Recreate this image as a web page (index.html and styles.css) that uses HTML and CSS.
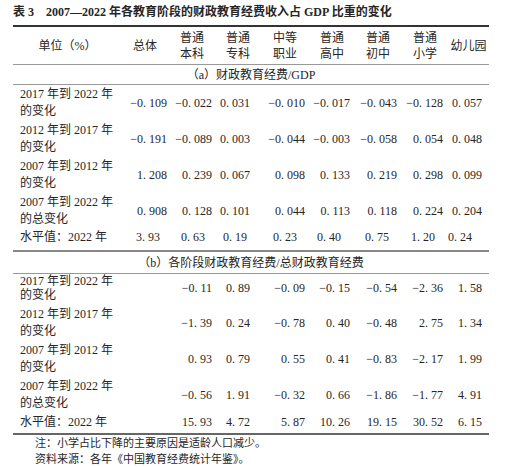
FILE: index.html
```html
<!DOCTYPE html>
<html lang="zh-CN">
<head>
    <meta charset="UTF-8">
    <meta name="viewport" content="width=device-width, initial-scale=1.0">
    <title>表 3</title>
    <link rel="stylesheet" href="styles.css">
</head>
<body>
    <div class="page">
        <h1 class="caption"><span class="tag">表 3</span>2007—2022 年各教育阶段的财政教育经费收入占 GDP 比重的变化</h1>

        <table class="data">
            <colgroup>
                <col class="c-label">
                <col class="c-total">
                <col class="c-bk">
                <col class="c-zk">
                <col class="c-zz">
                <col class="c-gz">
                <col class="c-cz">
                <col class="c-xx">
                <col class="c-yey">
            </colgroup>
            <thead>
                <tr>
                    <th>单位（%）</th>
                    <th>总体</th>
                    <th>普通<br>本科</th>
                    <th>普通<br>专科</th>
                    <th>中等<br>职业</th>
                    <th>普通<br>高中</th>
                    <th>普通<br>初中</th>
                    <th>普通<br>小学</th>
                    <th>幼儿园</th>
                </tr>
            </thead>
            <tbody>
                <tr class="section section-a">
                    <td colspan="9">（a）财政教育经费/GDP</td>
                </tr>
                <tr>
                    <td class="label">2017 年到 2022 年<br>的变化</td>
                    <td>−0. 109</td><td>−0. 022</td><td>0. 031</td><td>−0. 010</td>
                    <td>−0. 017</td><td>−0. 043</td><td>−0. 128</td><td>0. 057</td>
                </tr>
                <tr>
                    <td class="label">2012 年到 2017 年<br>的变化</td>
                    <td>−0. 191</td><td>−0. 089</td><td>0. 003</td><td>−0. 044</td>
                    <td>−0. 003</td><td>−0. 058</td><td>0. 054</td><td>0. 048</td>
                </tr>
                <tr>
                    <td class="label">2007 年到 2012 年<br>的变化</td>
                    <td>1. 208</td><td>0. 239</td><td>0. 067</td><td>0. 098</td>
                    <td>0. 133</td><td>0. 219</td><td>0. 298</td><td>0. 099</td>
                </tr>
                <tr>
                    <td class="label">2007 年到 2022 年<br>的总变化</td>
                    <td>0. 908</td><td>0. 128</td><td>0. 101</td><td>0. 044</td>
                    <td>0. 113</td><td>0. 118</td><td>0. 224</td><td>0. 204</td>
                </tr>
                <tr class="level level-a">
                    <td class="label">水平值：2022 年</td>
                    <td>3. 93</td><td>0. 63</td><td>0. 19</td><td>0. 23</td>
                    <td>0. 40</td><td>0. 75</td><td>1. 20</td><td>0. 24</td>
                </tr>

                <tr class="section section-b">
                    <td colspan="9">（b）各阶段财政教育经费/总财政教育经费</td>
                </tr>
                <tr class="first-b">
                    <td class="label">2017 年到 2022 年<br>的变化</td>
                    <td></td><td>−0. 11</td><td>0. 89</td><td>−0. 09</td>
                    <td>−0. 15</td><td>−0. 54</td><td>−2. 36</td><td>1. 58</td>
                </tr>
                <tr>
                    <td class="label">2012 年到 2017 年<br>的变化</td>
                    <td></td><td>−1. 39</td><td>0. 24</td><td>−0. 78</td>
                    <td>0. 40</td><td>−0. 48</td><td>2. 75</td><td>1. 34</td>
                </tr>
                <tr>
                    <td class="label">2007 年到 2012 年<br>的变化</td>
                    <td></td><td>0. 93</td><td>0. 79</td><td>0. 55</td>
                    <td>0. 41</td><td>−0. 83</td><td>−2. 17</td><td>1. 99</td>
                </tr>
                <tr>
                    <td class="label">2007 年到 2022 年<br>的总变化</td>
                    <td></td><td>−0. 56</td><td>1. 91</td><td>−0. 32</td>
                    <td>0. 66</td><td>−1. 86</td><td>−1. 77</td><td>4. 91</td>
                </tr>
                <tr class="level level-b">
                    <td class="label">水平值：2022 年</td>
                    <td></td><td>15. 93</td><td>4. 72</td><td>5. 87</td>
                    <td>10. 26</td><td>19. 15</td><td>30. 52</td><td>6. 15</td>
                </tr>
            </tbody>
        </table>

        <div class="notes">
            <p>注：小学占比下降的主要原因是适龄人口减少。</p>
            <p>资料来源：各年《中国教育经费统计年鉴》。</p>
        </div>
    </div>
</body>
</html>
```

FILE: styles.css
```css
* {
    margin: 0;
    padding: 0;
    box-sizing: border-box;
}

body {
    font-family: 'Liberation Serif', 'Noto Sans CJK SC', serif;
    font-size: 12px;
    color: #262626;
    background: #fff;
}

.page {
    width: 507px;
    padding: 4px 18px 0 13px;
}

/* caption */
.caption {
    font-size: 12px;
    font-weight: bold;
    line-height: 17px;
    margin-bottom: 4px;
    white-space: nowrap;
}

.caption .tag {
    margin-right: 12px;
}

/* table */
.data {
    width: 476px;
    border-collapse: collapse;
    table-layout: fixed;
    border-top: 2px solid #333;
}

.c-label { width: 109px; }
.c-total { width: 46px; }
.c-bk { width: 48px; }
.c-zk { width: 44px; }
.c-zz { width: 50px; }
.c-gz { width: 44px; }
.c-cz { width: 48px; }
.c-xx { width: 46px; }
.c-yey { width: 41px; }

.data th {
    font-weight: normal;
    line-height: 16px;
    padding: 3px 0 2px;
    text-align: center;
    vertical-align: middle;
    border-bottom: 1px solid #999;
}

.data td {
    line-height: 17px;
    padding: 1px 0;
    text-align: right;
    vertical-align: middle;
    white-space: nowrap;
}

.data td.label {
    text-align: left;
    padding-left: 7px;
}

/* number columns: right edges */
.data td:nth-child(2) { padding-right: 1px; }
.data td:nth-child(3) { padding-right: 4px; }
.data td:nth-child(4) { padding-right: 10px; }
.data td:nth-child(5) { padding-right: 5px; }
.data td:nth-child(6) { padding-right: 4px; }
.data td:nth-child(7) { padding-right: 5px; }
.data td:nth-child(8) { padding-right: 5px; }
.data td:nth-child(9) { padding-right: 7px; }

.level-a td:nth-child(2) { padding-right: 8px; }
.level-a td:nth-child(3) { padding-right: 11px; }
.level-a td:nth-child(4) { padding-right: 13px; }
.level-a td:nth-child(5) { padding-right: 13px; }
.level-a td:nth-child(6) { padding-right: 13px; }
.level-a td:nth-child(7) { padding-right: 13px; }
.level-a td:nth-child(8) { padding-right: 13px; }
.level-a td:nth-child(9) { padding-right: 17px; }

.data tr.section td {
    text-align: center;
    line-height: 18px;
    border-bottom: 1px solid #999;
}

.data tr.section-a td {
    padding: 1px 0 0;
}

.data tr.section-b td {
    padding: 2px 0 1px;
}

.data tr.level-a td {
    padding-top: 0;
    padding-bottom: 4px;
    border-bottom: 2px solid #888;
}

.data tr.first-b td {
    padding-top: 0;
    padding-bottom: 3px;
    line-height: 14px;
}

.data tr.level-b td {
    padding-top: 1px;
    padding-bottom: 2px;
    border-bottom: 2px solid #666;
}

/* notes */
.notes {
    padding-left: 22px;
    font-size: 11px;
    line-height: 16px;
}
```
